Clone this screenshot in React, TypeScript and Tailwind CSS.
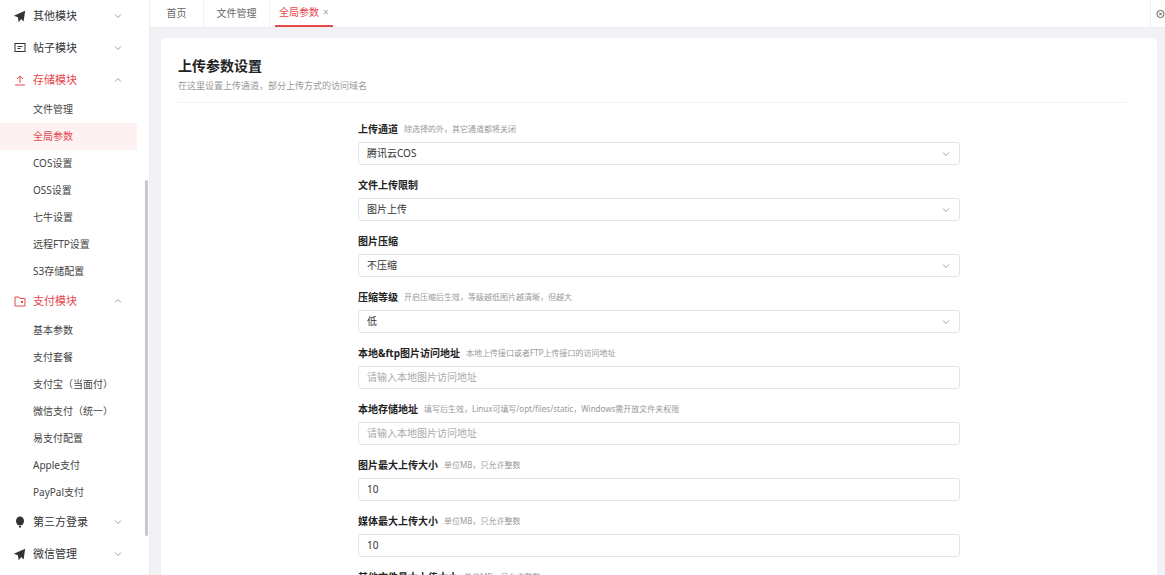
import React from "react";

const chev = (up?: boolean) => (
  <svg width="10" height="10" viewBox="0 0 10 10" className="text-gray-400"><path d={up ? "M2 6.5L5 3.5L8 6.5" : "M2 3.5L5 6.5L8 3.5"} fill="none" stroke="currentColor" strokeWidth="1" /></svg>
);

const Plane = () => (
  <svg width="13" height="13" viewBox="0 0 16 16"><path d="M15 1L1 7l5 2 1 6 3-4 3 3z" fill="#333" /></svg>
);

function Top({ icon, label, open, red }: { icon: React.ReactNode; label: string; open?: boolean; red?: boolean }) {
  return (
    <div className={`h-[32px] flex items-center pl-[13px] pr-[26px] text-[11px] ${red ? "text-[#e5484d]" : "text-[#333]"}`}>
      <span className="w-[13px] h-[13px] flex items-center justify-center">{icon}</span>
      <span className="ml-[7px] flex-1">{label}</span>
      {chev(open)}
    </div>
  );
}
function Sub({ label, active }: { label: string; active?: boolean }) {
  return (
    <div className={`h-[27px] flex items-center pl-[33px] text-[10px] mr-[12px] ${active ? "bg-[#fdf1f1] text-[#e5484d]" : "text-[#444]"}`}>{label}</div>
  );
}

const fields = [
  { l: "上传通道", h: "除选择的外，其它通道都将关闭", v: "腾讯云COS", s: true },
  { l: "文件上传限制", h: "", v: "图片上传", s: true },
  { l: "图片压缩", h: "", v: "不压缩", s: true },
  { l: "压缩等级", h: "开启压缩后生效，等级越低图片越清晰，但越大", v: "低", s: true },
  { l: "本地&ftp图片访问地址", h: "本地上传接口或者FTP上传接口的访问地址", v: "请输入本地图片访问地址", p: true },
  { l: "本地存储地址", h: "填写后生效，Linux可填写/opt/files/static，Windows需开放文件夹权限", v: "请输入本地图片访问地址", p: true },
  { l: "图片最大上传大小", h: "单位MB，只允许整数", v: "10" },
  { l: "媒体最大上传大小", h: "单位MB，只允许整数", v: "10" },
  { l: "其他文件最大上传大小", h: "单位MB，只允许整数", v: "10" },
];

export default function App() {
  return (
    <div className="w-[1165px] h-[575px] overflow-hidden flex bg-[#f0f2f5]" style={{ fontFamily: '"Noto Sans", "Noto Sans CJK SC", sans-serif' }}>
      <aside className="w-[150px] shrink-0 bg-white border-r border-[#eee] relative">
        <div className="absolute right-[1px] top-[180px] w-[3px] h-[356px] bg-[#c8c8c8] rounded" />
        <Top icon={<Plane />} label="其他模块" />
        <Top icon={<svg width="12" height="12" viewBox="0 0 12 12"><rect x="1" y="1.5" width="10" height="8" fill="none" stroke="#333" /><path d="M3.5 4.5h5M3.5 6.5h3" stroke="#333" /></svg>} label="帖子模块" />
        <Top red open icon={<svg width="12" height="12" viewBox="0 0 12 12"><path d="M6 9V2M3 5l3-3 3 3M1 11h10" fill="none" stroke="#e5484d" /></svg>} label="存储模块" />
        {["文件管理", "全局参数", "COS设置", "OSS设置", "七牛设置", "远程FTP设置", "S3存储配置"].map((s) => <Sub key={s} label={s} active={s === "全局参数"} />)}
        <Top red open icon={<svg width="12" height="12" viewBox="0 0 12 12"><path d="M1 2h4l1 1.5h5V11H1z" fill="none" stroke="#e5484d" /><rect x="7" y="6" width="2" height="2" fill="#e5484d" /></svg>} label="支付模块" />
        {["基本参数", "支付套餐", "支付宝（当面付）", "微信支付（统一）", "易支付配置", "Apple支付", "PayPal支付"].map((s) => <Sub key={s} label={s} />)}
        <Top icon={<svg width="12" height="12" viewBox="0 0 12 12"><ellipse cx="6" cy="5" rx="4" ry="4.5" fill="#333" /><path d="M5 10h2v1.5H5z" fill="#333" /></svg>} label="第三方登录" />
        <Top icon={<Plane />} label="微信管理" />
      </aside>
      <main className="flex-1 flex flex-col min-w-0">
        <div className="h-[28px] bg-white flex items-stretch text-[10px] shrink-0 border-b border-[#eee]">
          <div className="w-[54px] flex items-center justify-center text-[#666] border-r border-[#f0f0f0]">首页</div>
          <div className="w-[66px] flex items-center justify-center text-[#666] border-r border-[#f0f0f0]">文件管理</div>
          <div className="ml-[5px] px-[4px] flex items-center text-[#e5484d] border-b-2 border-[#e5484d]">全局参数<span className="ml-[4px] text-[#aaa]">×</span></div>
          <div className="flex-1" />
          <div className="w-[15px] flex items-center border-l border-[#eee] pl-[5px]">
            <svg width="10" height="10" viewBox="0 0 10 10"><circle cx="5" cy="5" r="4" fill="none" stroke="#555" /><path d="M3.5 3.5l3 3M6.5 3.5l-3 3" stroke="#555" /></svg>
          </div>
        </div>
        <div className="flex-1 pt-[10px] pl-[11px] pr-[8px]">
          <div className="bg-white rounded-[5px] h-full px-[17px] pt-[18px]">
            <div className="text-[14px] font-bold text-[#222] leading-[20px]">上传参数设置</div>
            <div className="text-[9px] text-[#999] mt-[4px] leading-[12px]">在这里设置上传通道，部分上传方式的访问域名</div>
            <div className="border-b border-[#f2f2f2] mt-[10px] mr-[14px]" />
            <div className="ml-[180px] w-[602px] pt-[18px] flex flex-col gap-[12px]">
              {fields.map((f) => (
                <div key={f.l}>
                  <div className="h-[16px] flex items-center text-[10px]">
                    <span className="font-bold text-[#222]">{f.l}</span>
                    {f.h && <span className="ml-[6px] text-[8px] text-[#999]">{f.h}</span>}
                  </div>
                  <div className="mt-[5px] h-[23px] border border-[#e4e4e4] rounded-[3px] flex items-center px-[8px] text-[10px]">
                    <span className={`flex-1 ${f.p ? "text-[#aaa]" : "text-[#333]"}`}>{f.v}</span>
                    {f.s && chev()}
                  </div>
                </div>
              ))}
            </div>
          </div>
        </div>
      </main>
    </div>
  );
}
